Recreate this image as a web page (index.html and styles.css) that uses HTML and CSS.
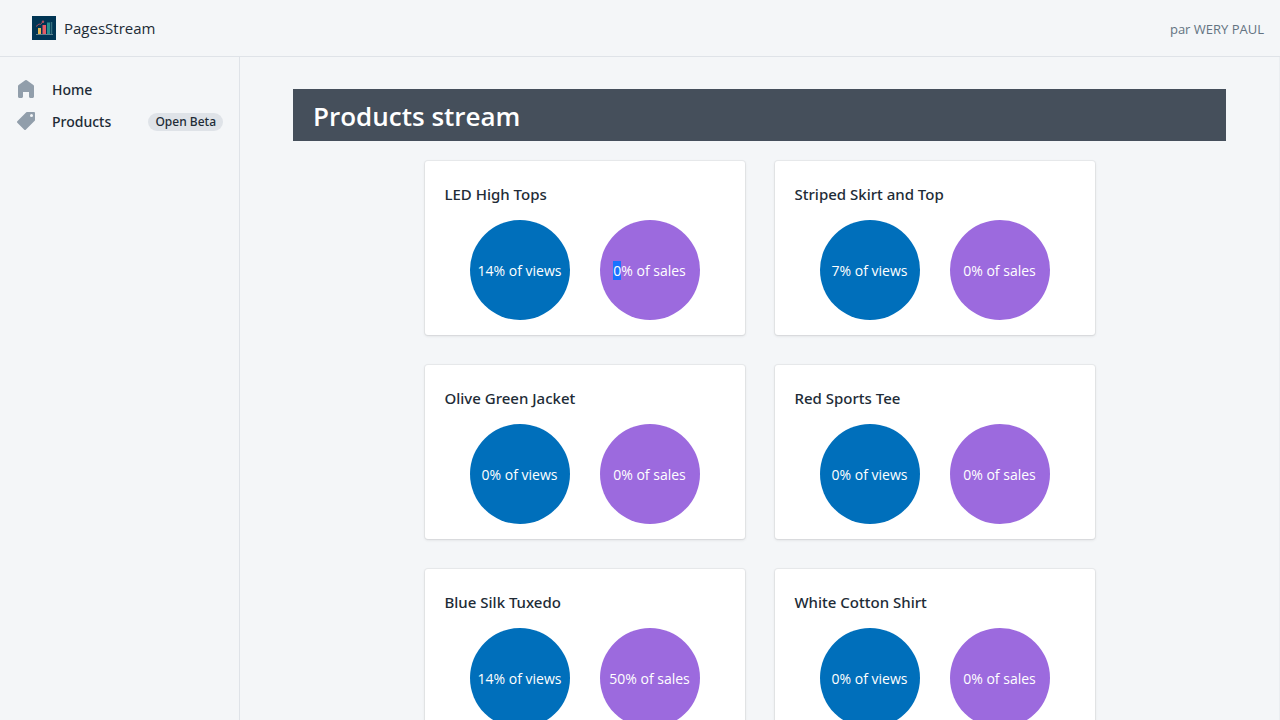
FILE: index.html
```html
<!DOCTYPE html>
<html lang="en">
<head>
<meta charset="utf-8">
<meta name="viewport" content="width=device-width, initial-scale=1">
<title>PagesStream</title>
<link rel="stylesheet" href="styles.css">
</head>
<body>
<header class="topbar">
  <a class="brand" href="#">
    <svg class="brand-logo" viewBox="0 0 24 24" aria-hidden="true">
      <rect width="24" height="24" fill="#003554"/>
      <path d="M4 18.500h17" stroke="#5f8391" stroke-width="1"/>
      <rect x="6" y="12" width="3" height="6" fill="#e3b552"/>
      <rect x="10.500" y="9" width="3.500" height="9" fill="#e45a65"/>
      <rect x="15" y="6.500" width="3" height="11.500" fill="#2c8f8f"/>
      <path d="M19.500 6v12" stroke="#35707f" stroke-width="1.500"/>
      <path d="M4 10.500l3-2.500 1.500 .5 2.500-3" fill="none" stroke="#a3495c" stroke-width="1"/>
      <circle cx="11" cy="5.800" r="1.200" fill="#b05060"/>
    </svg>
    <span>PagesStream</span>
  </a>
  <span class="author">par WERY PAUL</span>
</header>
<div class="layout">
  <nav class="sidebar" aria-label="Main">
    <a class="nav-link" href="#">
      <svg class="nav-icon" viewBox="0 0 20 20" aria-hidden="true"><path d="M18 7.261V17.500c0 .841-.672 1.500-1.500 1.500h-2c-.828 0-1.500-.659-1.500-1.500V13H7v4.477C7 18.318 6.328 19 5.500 19h-2c-.828 0-1.500-.682-1.500-1.523V7.261a1.500 1.500 0 01.615-1.210l6.590-4.820a1.481 1.481 0 011.590 0l6.590 4.820A1.500 1.500 0 0118 7.260z"/></svg>
      <span>Home</span>
    </a>
    <a class="nav-link" href="#">
      <svg class="nav-icon" viewBox="0 0 20 20" aria-hidden="true"><path fill-rule="evenodd" d="M10.293 1.293A1 1 0 0111 1h7a1 1 0 011 1v7a1 1 0 01-.293.707l-9 9a1 1 0 01-1.414 0l-7-7a1 1 0 010-1.414l9-9zM15.500 6a1.500 1.500 0 100-3 1.500 1.500 0 000 3z"/></svg>
      <span>Products</span>
      <span class="badge">Open Beta</span>
    </a>
  </nav>
  <main class="content">
    <h1 class="banner">Products stream</h1>
    <div class="cards">
      <section class="card">
        <h2 class="card-title">LED High Tops</h2>
        <div class="stats"><div class="stat views">14% of views</div><div class="stat sales"><span><mark class="selected">0</mark>% of sales</span></div></div>
      </section>
      <section class="card">
        <h2 class="card-title">Striped Skirt and Top</h2>
        <div class="stats"><div class="stat views">7% of views</div><div class="stat sales">0% of sales</div></div>
      </section>
      <section class="card">
        <h2 class="card-title">Olive Green Jacket</h2>
        <div class="stats"><div class="stat views">0% of views</div><div class="stat sales">0% of sales</div></div>
      </section>
      <section class="card">
        <h2 class="card-title">Red Sports Tee</h2>
        <div class="stats"><div class="stat views">0% of views</div><div class="stat sales">0% of sales</div></div>
      </section>
      <section class="card">
        <h2 class="card-title">Blue Silk Tuxedo</h2>
        <div class="stats"><div class="stat views">14% of views</div><div class="stat sales">50% of sales</div></div>
      </section>
      <section class="card">
        <h2 class="card-title">White Cotton Shirt</h2>
        <div class="stats"><div class="stat views">0% of views</div><div class="stat sales">0% of sales</div></div>
      </section>
    </div>
  </main>
</div>
</body>
</html>
```
FILE: styles.css
```css
* { box-sizing: border-box; }

body {
  margin: 0;
  min-height: 100vh;
  display: flex;
  flex-direction: column;
  background: #f4f6f8;
  color: #212b36;
  font-family: "Segoe UI", "Open Sans", "Noto Sans", sans-serif;
  font-size: 14px;
  line-height: 20px;
}

a { color: inherit; text-decoration: none; }

.topbar {
  display: flex;
  align-items: center;
  justify-content: space-between;
  height: 57px;
  padding: 0 16px 0 32px;
  border-bottom: 1px solid #dfe3e8;
}

.brand {
  display: flex;
  align-items: center;
  gap: 8px;
  font-size: 15px;
}

.brand-logo { width: 24px; height: 24px; }

.author {
  padding-top: 2px;
  color: #637381;
  font-size: 13px;
}

.layout { display: flex; flex: 1; }

.sidebar {
  flex: none;
  width: 240px;
  padding: 16px;
  border-right: 1px solid #dfe3e8;
}

.nav-link {
  display: flex;
  align-items: center;
  height: 32px;
  font-family: "Segoe UI", "Noto Sans", sans-serif;
  font-weight: 500;
}

.nav-link > span { margin-top: 2px; }

.nav-icon {
  width: 20px;
  height: 20px;
  margin-right: 16px;
  fill: #919eab;
}

.nav-link > .badge {
  margin-left: auto;
  padding: 0 7px;
  border-radius: 9px;
  background: #dfe3e8;
  font-size: 12px;
  line-height: 18px;
}

.content {
  flex: 1;
  min-width: 0;
  padding: 32px 53px;
  border-right: 1px solid #ebeef1;
}

.banner {
  margin: 0 0 20px;
  padding: 9px 20px 7px;
  background: #454f5b;
  color: #fff;
  font-size: 26px;
  font-weight: 600;
  line-height: 36px;
}

.cards {
  display: flex;
  flex-wrap: wrap;
  justify-content: center;
  gap: 30px;
}

.card {
  width: 320px;
  padding: 21px 20px 15px;
  border-radius: 3px;
  background: #fff;
  box-shadow: 0 0 0 1px rgba(63, 63, 68, 0.05), 0 1px 3px rgba(63, 63, 68, 0.15);
}

.card-title {
  margin: 0 0 14px;
  font-family: "Segoe UI", "Noto Sans", sans-serif;
  font-size: 15px;
  font-weight: 500;
  line-height: 24px;
}

.stats {
  display: flex;
  justify-content: center;
  gap: 30px;
}

.stat {
  display: flex;
  align-items: center;
  justify-content: center;
  width: 100px;
  height: 100px;
  padding-top: 2px;
  border-radius: 50%;
  color: #fff;
  white-space: nowrap;
}

.views { background: #006fbb; }
.sales { background: #9c6ade; }

.selected {
  background: #1a73ff;
  color: inherit;
}
```
